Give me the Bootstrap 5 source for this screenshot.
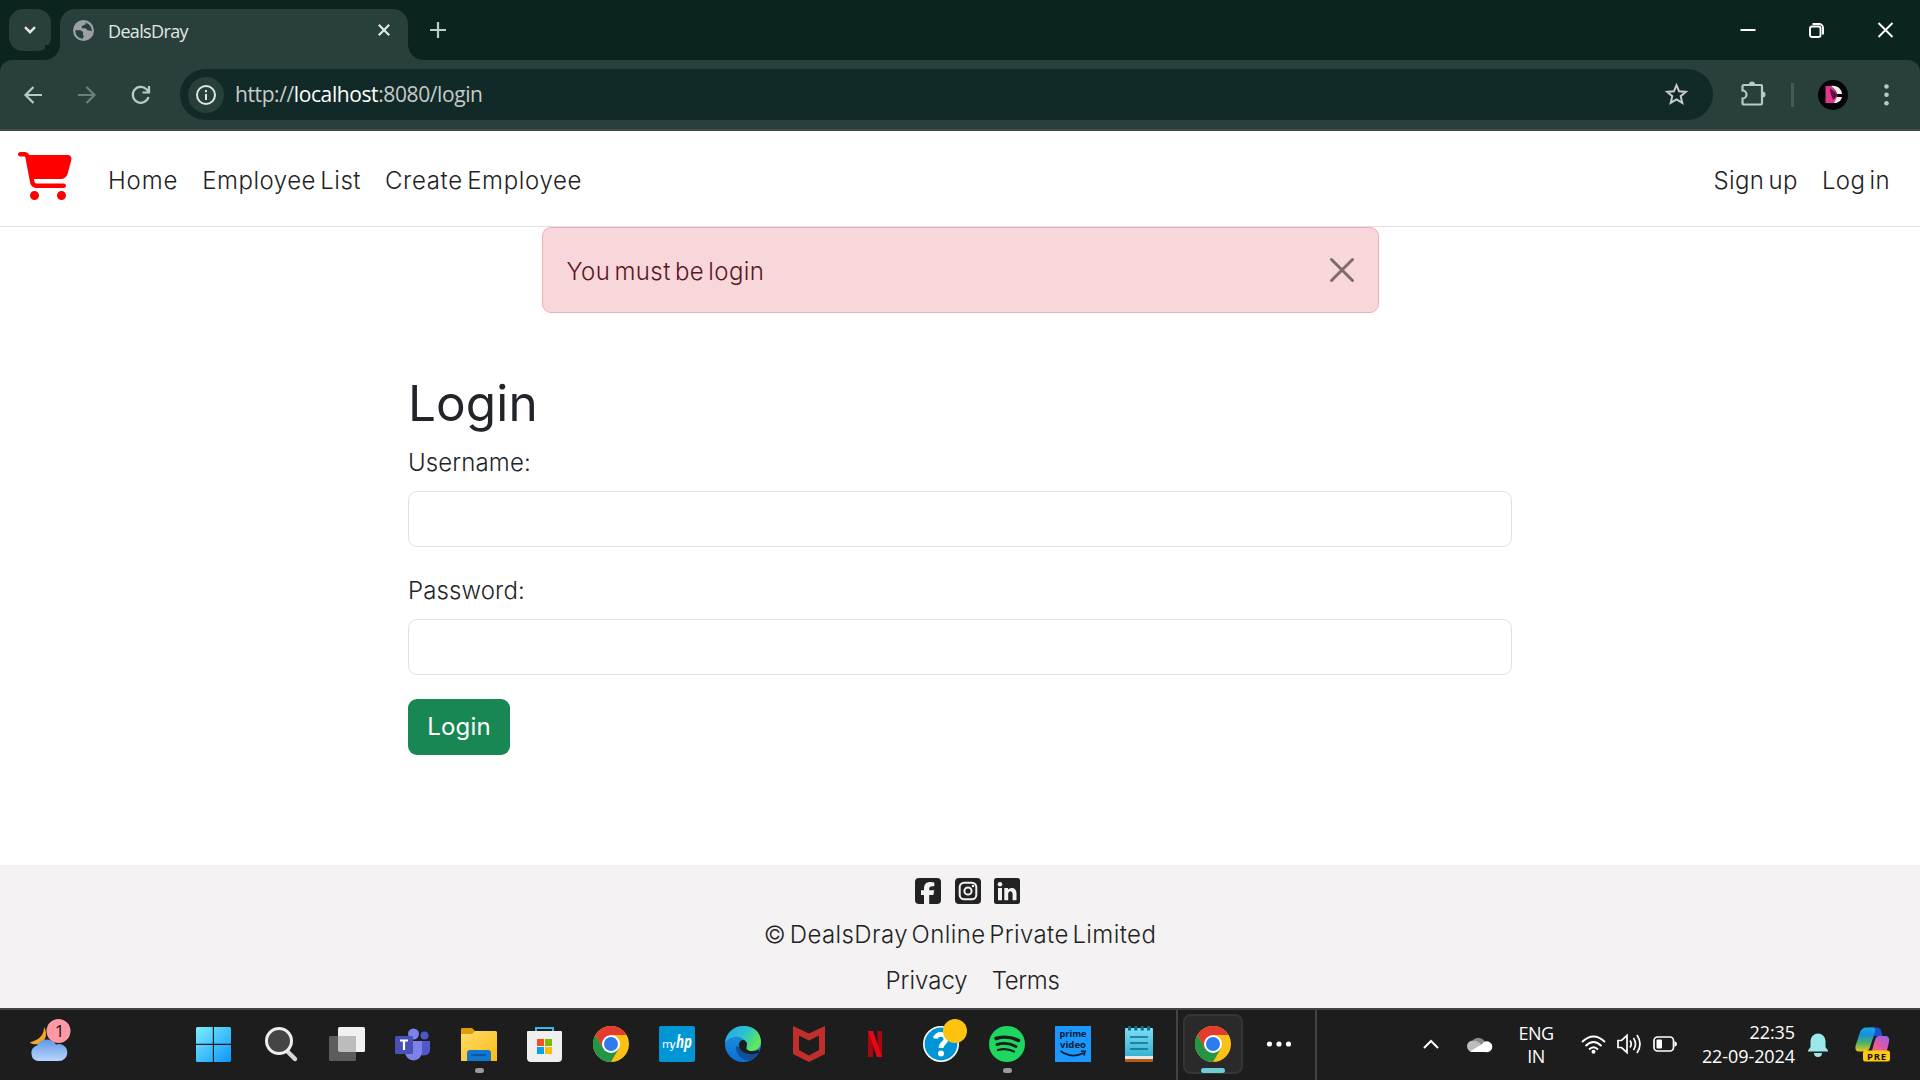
<!DOCTYPE html>
<html lang="en">
<head>
<meta charset="utf-8">
<title>DealsDray</title>
<link href="https://cdn.jsdelivr.net/npm/bootstrap@5.3.0/dist/css/bootstrap.min.css" rel="stylesheet">
<style>
html{font-size:24px}
body{width:1920px;height:1080px;overflow:hidden;font-family:Inter,"Liberation Sans",sans-serif;font-weight:300;color:#212529;background:#fff}
svg{display:block;flex:none;overflow:visible}
.seg{font-family:"Open Sans","Noto Sans",sans-serif;font-weight:400}
.tabstrip{height:60px;background:#0b2420;color:#e3e8e6}
.tabsearch{width:42px;height:42px;margin:9px 9px 0 9px;border-radius:14px;background:#283f3b}
.tabbox{width:348px;height:51px;margin-top:9px;border-radius:15px 15px 0 0;background:#283f3b;padding:0 18px 0 13px;position:relative}
.tabbox::before,.tabbox::after{content:"";position:absolute;bottom:0;width:15px;height:15px}
.tabbox::before{left:-15px;background:radial-gradient(circle at 0 0,#0b2420 14.5px,#283f3b 15px)}
.tabbox::after{right:-15px;background:radial-gradient(circle at 100% 0,#0b2420 14.5px,#283f3b 15px)}
.tabtitle{font-size:18px;letter-spacing:-.65px;margin:-7px 0 0 14px;line-height:24px}
.tabicon{margin-top:-9px}
.newtab{margin-left:22px}
.wincell{width:69px}
.toolbox{height:71px;background:#0b2420}
.toolinner{width:1920px;height:71px;border-radius:12px 12px 0 0;background:#283f3b;border-bottom:2px solid #454a49}
.backicon{margin-left:24px}
.gap36{margin-left:36px}
.omni{width:1533px;height:51px;border-radius:26px;background:#112a27;margin-left:30px}
.infoc{width:36px;height:36px;border-radius:50%;background:#283f3b;margin-left:8px}
.url{font-size:21px;letter-spacing:-.4px;margin:-2px 0 0 11px;color:#c7cbca;line-height:30px}
.url span{color:#fff}
.star{margin:-2px 25px 0 auto}
.puzzle{margin:-3px 0 0 28px}
.toolsep{width:3px;height:24px;margin-left:25px;background:#415a55}
.avatar{margin-left:24px}
.sitenav{height:96px;border-bottom:1px solid #dee2e6;padding:5px 18px 0}
.sitenav .nav-link{color:#222;padding:0 12px;line-height:36px;white-space:nowrap}
.sitenav .nav-link:focus,.sitenav .nav-link:hover{color:#222}
.brandcart{margin:-11px 24px 0 0}
.nl1{letter-spacing:.85px}
.nl2{letter-spacing:.5px;word-spacing:-3px}
.nl3{letter-spacing:.65px;word-spacing:-3px}
.nl4{letter-spacing:.4px;word-spacing:-3px}
.notice{width:837px;height:86px;padding:0 24px;border-radius:9px;color:#58151c;background:#f8d7da;border:1px solid #f1aeb5;line-height:36px}
.notice span{padding-top:3px;letter-spacing:.42px;word-spacing:-3px}
.formcol{width:1104px;height:552px;padding-top:61px}
.formcol h1{font-size:49.5px;font-weight:400;line-height:58px;margin:0 0 13px;letter-spacing:.1px}
.formcol label{line-height:36px;margin-bottom:10px;display:block;letter-spacing:.12px}
.formcol .form-control{height:56px;border-radius:9px;border-color:#dee2e6;margin-bottom:26px}
.formcol .btn{height:56px;padding:0;width:102px;border-radius:9px;background:#198754;line-height:56px;font-size:24px;border:0;display:block;margin-top:-2px;letter-spacing:.2px}
.sitefoot{height:143px;background:#f4f2f3;color:#222;text-align:center;padding-top:13px}
.sitefoot a{color:#222;text-decoration:none}
.socials{gap:13.5px;padding-left:15px}
.copyline{margin-top:13px;line-height:36px;letter-spacing:.4px;word-spacing:-3.5px}
.legal{margin-top:10px;line-height:36px;gap:24px;padding-left:25px}
.legal a+a{letter-spacing:-.35px}
.taskbar{height:72px;background:#1d1d1d;border-top:2px solid #434343;color:#fff;padding-bottom:2px}
.weather{width:182px;padding-left:30px}
.weather svg{margin-top:-6px}
.tcell{width:66px;height:70px;position:relative}
.nudge1 svg{margin-left:-2px}
.nudge3 svg{margin-left:-3px}
.dotm{position:absolute;bottom:6px;left:50%;margin-left:-4px;width:9px;height:5px;border-radius:3px;background:#9a9a9a}
.lang{width:46px;margin:2px 0 0 22px;font-size:18px;line-height:23px;letter-spacing:-.6px}
.clock{font-size:18px;line-height:24px;text-align:right;letter-spacing:-.08px;width:100px;margin:-1px 0 0 18px}
.running{width:60px;height:60px;border-radius:8px;background:#2a2a2a;border:2px solid #353535;margin-left:5px;position:relative}
.running i{position:absolute;left:16px;bottom:-1px;width:24px;height:5px;border-radius:3px;background:#6fcbd6}
.vline{width:2px;height:70px;background:#434343;align-self:flex-start}
.firstline{margin-left:4px}
.gap24{margin-left:24px}
.traystart{margin-left:106px}
.gap28{margin-left:28px}
.gap22{margin-left:22px}
.gap11{margin-left:11px}
.bell{margin-left:13px}
.copilot{margin-left:27px}
</style>
<script src="https://cdn.jsdelivr.net/npm/bootstrap@5.3.0/dist/js/bootstrap.bundle.min.js"></script>
</head>
<body class="d-flex flex-column">
<svg width="0" height="0" class="position-absolute"><defs>
<linearGradient id="win" x1="0" y1="0" x2="1" y2="1"><stop offset="0" stop-color="#7cf0fd"/><stop offset="1" stop-color="#0d94fb"/></linearGradient>
<linearGradient id="cloudg" x1="0" y1="0" x2="0" y2="1"><stop offset="0" stop-color="#5f98e8"/><stop offset="1" stop-color="#b9d5fb"/></linearGradient>
<linearGradient id="fold" x1="0" y1="0" x2="1" y2="1"><stop offset="0" stop-color="#ffdc6a"/><stop offset="1" stop-color="#fabb14"/></linearGradient>
<linearGradient id="edg1" x1="0" y1="0" x2="1" y2=".5"><stop offset="0" stop-color="#2aa5ee"/><stop offset=".55" stop-color="#2ac3cd"/><stop offset="1" stop-color="#62e75b"/></linearGradient>
<linearGradient id="edg2" x1="0" y1="0" x2="0" y2="1"><stop offset="0" stop-color="#2297e0"/><stop offset="1" stop-color="#0b6fd0"/></linearGradient>
<linearGradient id="cop1" x1="0" y1="0" x2="0" y2="1"><stop offset="0" stop-color="#18a8ea"/><stop offset=".3" stop-color="#1590da"/><stop offset=".65" stop-color="#4eb264"/><stop offset="1" stop-color="#e9c81c"/></linearGradient>
<linearGradient id="cop2" x1="1" y1="0" x2="0" y2="1"><stop offset="0" stop-color="#9b5cf0"/><stop offset=".5" stop-color="#e2589f"/><stop offset="1" stop-color="#f58a50"/></linearGradient>
<linearGradient id="note" x1="0" y1="0" x2="0" y2="1"><stop offset="0" stop-color="#7fdcf2"/><stop offset="1" stop-color="#38b2d3"/></linearGradient>
<symbol id="chrome" viewBox="0 0 36 36"><circle cx="18" cy="18" r="18" fill="#fbc116"/><path d="M18 9H33.6A18 18 0 0 0 2.4 9L10.2 22.5Z" fill="#e33b2e"/><path d="M2.4 9A18 18 0 0 0 18 36L25.8 22.5L18 20L10.2 22.5Z" fill="#249643"/><circle cx="18" cy="18" r="9" fill="#fff"/><circle cx="18" cy="18" r="7" fill="#2d7bee"/></symbol>
</defs></svg>

<header class="tabstrip d-flex flex-shrink-0">
  <div class="tabsearch d-flex align-items-center justify-content-center"><svg width="12" height="8" viewBox="0 0 12 8" fill="none" stroke="#e3e8e6" stroke-width="2.4"><path d="M1 1.2L6 6.2L11 1.2"/></svg></div>
  <div class="tabbox d-flex align-items-center">
    <svg class="tabicon" width="21" height="21" viewBox="0 0 21 21"><circle cx="10.5" cy="10.5" r="9.5" fill="#9aa0a6" stroke="#9aa0a6" stroke-width="2"/><path d="M2.300 10.500C5 10 8 10 9.500 11.500C11 13 9 14.500 10.500 15.500C11.500 16.200 10 18 9.500 18.700C5 18.200 2.300 14.500 2.300 10.500ZM9.500 2.300C12 2 13 3 12.500 4C12 5.500 9 5 8.500 7C9.500 9.500 12.500 7.500 14 9.500C15 11.500 17 10 18.700 11.500C19.200 7 16 2.500 9.500 2.300Z" fill="#283f3b"/></svg>
    <span class="tabtitle seg flex-grow-1">DealsDray</span>
    <svg class="tabicon" width="12" height="12" viewBox="0 0 12 12" stroke="#e3e8e6" stroke-width="2.2"><path d="M.8 .8L11.200 11.200M11.200 .8L.8 11.200"/></svg>
  </div>
  <svg class="newtab" width="16" height="60" viewBox="0 0 16 60" stroke="#b7cfc9" stroke-width="2.2"><path d="M0 30H16M8 22V38"/></svg>
  <div class="ms-auto d-flex align-items-center">
    <div class="wincell d-flex justify-content-center"><svg width="15" height="15"><path d="M.5 7H15.500" stroke="#fff" stroke-width="2"/></svg></div>
    <div class="wincell d-flex justify-content-center"><svg width="15" height="15" fill="none" stroke="#fff" stroke-width="1.900"><rect x="1" y="3.500" width="10.500" height="10.500" rx="2"/><path d="M3.500 1H10A4 4 0 0 1 14 5V11.500"/></svg></div>
    <div class="wincell d-flex justify-content-center"><svg width="15" height="15" stroke="#fff" stroke-width="1.900"><path d="M.5 0L14.500 14M14.500 0L.5 14"/></svg></div>
  </div>
</header>

<div class="toolbox flex-shrink-0"><div class="toolinner d-flex align-items-center">
  <svg class="backicon" width="18" height="18" viewBox="0 0 18 18" fill="none" stroke="#b2cdc6" stroke-width="2.200"><path d="M18 9H2M9.500 1L1.500 9L9.500 17"/></svg>
  <svg class="gap36" width="18" height="18" viewBox="0 0 18 18" fill="none" stroke="#6b807b" stroke-width="2.200"><path d="M0 9H16M8.500 1L16.500 9L8.500 17"/></svg>
  <svg class="gap36" width="18" height="18" viewBox="0 0 18 18" fill="none" stroke="#b2cdc6" stroke-width="2.200"><path d="M16.500 11A8 8 0 1 1 14.500 3.200L16 5M17 0V6.500H10.500"/></svg>
  <div class="omni d-flex align-items-center">
    <div class="infoc d-flex align-items-center justify-content-center"><svg width="20" height="20" viewBox="0 0 20 20"><circle cx="10" cy="10" r="9" fill="none" stroke="#dfe6e4" stroke-width="2"/><path d="M10 9V15M10 5V7.200" stroke="#dfe6e4" stroke-width="2"/></svg></div>
    <div class="url seg">http://<span>localhost</span>:8080/login</div>
    <svg class="star" width="23" height="22" viewBox="0 0 23 22" fill="none" stroke="#c7cbca" stroke-width="2"><path d="M11.500 2.200L14.100 8.300L20.800 8.900L15.700 13.200L17.300 19.800L11.500 16.300L5.700 19.800L7.300 13.200L2.200 8.900L8.900 8.300Z"/></svg>
  </div>
  <svg class="puzzle" width="25" height="25" viewBox="0 0 25 25" fill="none" stroke="#b2cdc6" stroke-width="2.200"><path d="M3 4H20Q21 4 21 5V22Q21 23.500 20 23.500H3Q1.500 23.500 1.500 22V17.500A4 4 0 0 0 1.500 9.500V5Q1.500 4 3 4Z"/><path d="M8 3.500A3 3 0 0 1 14 3.500ZM21.500 10.500A3 3 0 0 1 21.500 16.500Z" fill="#b2cdc6" stroke="none"/></svg>
  <div class="toolsep"></div>
  <svg class="avatar" width="30" height="30" viewBox="0 0 30 30"><circle cx="15" cy="15" r="15" fill="#050305"/><path d="M7.500 6H13Q23 15 17 23H7.500Z" fill="#e0368d"/><path d="M13 6C20 5 24 10 24 14H19C18 10 16 9 13 6ZM24 17C23 21 20 23 16 23L19 17Z" fill="#f1eef0"/><path d="M12 8L20 15L15 20Q12 14 12 8Z" fill="#5e0f3a"/></svg>
  <svg class="gap36" width="5" height="22" viewBox="0 0 5 22" fill="#b2cdc6"><circle cx="2.500" cy="2.500" r="2.300"/><circle cx="2.500" cy="10.800" r="2.300"/><circle cx="2.500" cy="19.200" r="2.300"/></svg>
</div></div>

<nav class="sitenav d-flex align-items-center flex-shrink-0">
  <svg class="brandcart" width="54" height="48" viewBox="0 0 576 512" fill="#f00"><path d="M0 24C0 10.700 10.700 0 24 0H69.500c22 0 41.500 12.800 50.600 32h411c26.300 0 45.500 25 38.600 50.400l-41 152.300c-8.500 31.400-37 53.300-69.500 53.300H170.700l5.400 28.500c2.200 11.300 12.100 19.500 23.600 19.500H488c13.300 0 24 10.700 24 24s-10.700 24-24 24H199.700c-34.600 0-64.300-24.600-70.700-58.500L77.400 54.500c-.7-3.800-4-6.500-7.900-6.500H24C10.700 48 0 37.300 0 24zM128 464a48 48 0 1 1 96 0 48 48 0 1 1-96 0zm336-48a48 48 0 1 1 0 96 48 48 0 1 1 0-96z"/></svg>
  <div class="d-flex"><a class="nav-link nl1" href="#">Home</a><a class="nav-link nl2" href="#">Employee List</a><a class="nav-link nl3" href="#">Create Employee</a></div>
  <div class="d-flex ms-auto"><a class="nav-link nl4" href="#">Sign up</a><a class="nav-link nl4" href="#">Log in</a></div>
</nav>

<main class="d-flex flex-column align-items-center flex-shrink-0">
  <div class="notice d-flex justify-content-between align-items-center"><span>You must be login</span><svg width="24" height="24" stroke="#7d6b6e" stroke-width="3" stroke-linecap="round"><path d="M1.500 1.500L22.500 22.500M22.500 1.500L1.500 22.500"/></svg></div>
  <form class="formcol">
    <h1>Login</h1>
    <label for="u">Username:</label><input id="u" class="form-control" type="text">
    <label for="p">Password:</label><input id="p" class="form-control" type="password">
    <button type="button" class="btn btn-success">Login</button>
  </form>
</main>

<footer class="sitefoot flex-shrink-0">
  <div class="socials d-flex justify-content-center">
    <svg width="26" height="26" viewBox="0 0 26 26"><rect width="26" height="26" rx="4" fill="#222"/><path d="M9 26V17H6V12.300H9V10.500C9 6 11.500 4 15.500 4Q17.500 4 19.300 4.400V8.300H17.300Q14.200 8.300 14.200 11V12.300H19.200L18.400 17H14.200V26Z" fill="#f4f2f3"/></svg>
    <svg width="26" height="26" viewBox="0 0 26 26"><rect width="26" height="26" rx="4" fill="#222"/><rect x="4.700" y="4.700" width="16.600" height="16.600" rx="4.500" fill="none" stroke="#f4f2f3" stroke-width="2"/><circle cx="13" cy="13" r="3.600" fill="none" stroke="#f4f2f3" stroke-width="2"/><circle cx="18" cy="8" r="1.300" fill="#f4f2f3"/></svg>
    <svg width="26" height="26" viewBox="0 0 26 26"><rect width="26" height="26" rx="2.500" fill="#222"/><circle cx="6" cy="6.200" r="2.300" fill="#f4f2f3"/><path d="M4 10H8V22.300H4ZM10.300 10H14V11.700C15.500 9.300 22.500 8.500 22.500 15.500V22.300H18.600V16.300C18.600 12 14.200 12.300 14.200 16.300V22.300H10.300Z" fill="#f4f2f3"/></svg>
  </div>
  <div class="copyline">© DealsDray Online Private Limited</div>
  <div class="legal d-flex justify-content-center"><a href="#">Privacy</a><a href="#">Terms</a></div>
</footer>

<div class="taskbar d-flex align-items-center flex-shrink-0">
  <div class="weather"><svg width="42" height="44" viewBox="0 0 42 44"><path d="M14 8C20 18 12 29 0 24C0 22 14 22 14 8Z" fill="#f5a623"/><path d="M8 42A8 8 0 0 1 7 26.500A11 11 0 0 1 26 25.500A8.500 8.500 0 1 1 28 42Z" fill="url(#cloudg)"/><circle cx="28.500" cy="12" r="12" fill="#ff99a4"/><text x="29.500" y="18" font-size="17" font-family="Open Sans" font-weight="400" fill="#111" text-anchor="middle">1</text></svg></div>
  <div class="tcell nudge3 d-flex align-items-center justify-content-center"><svg width="35" height="35" viewBox="0 0 35 35"><path d="M1 0H16.800V16.800H0V1ZM18 0H34L35 1V16.800H18ZM0 18H16.800V35H1L0 34ZM18 18H35V34L34 35H18Z" fill="url(#win)"/></svg></div>
  <div class="tcell d-flex align-items-center justify-content-center"><svg width="32" height="34" viewBox="0 0 32 34"><path d="M22 24L30 32" stroke="#d4d9dd" stroke-width="4.500" stroke-linecap="round"/><circle cx="14" cy="14" r="12.500" fill="#454545" stroke="#eceeef" stroke-width="3"/></svg></div>
  <div class="tcell d-flex align-items-center justify-content-center"><svg width="36" height="34" viewBox="0 0 36 34"><rect x="9" y="0" width="27" height="25" rx="1.500" fill="#f1f1f1"/><rect x="0" y="9" width="27" height="25" rx="1.500" fill="#5c5c5c"/><path d="M9 9H27V25H10.500L9 23.500Z" fill="#bcbcbc"/></svg></div>
  <div class="tcell nudge1 d-flex align-items-center justify-content-center"><svg width="35" height="33" viewBox="0 0 35 33"><circle cx="29.500" cy="7.500" r="4" fill="#4f57c8"/><circle cx="18.500" cy="6" r="5.500" fill="#7b83eb"/><path d="M25 13H35V22A6 6 0 0 1 25 26Z" fill="#5059c9"/><path d="M10 13H27V24A8.500 8.500 0 0 1 10 24Z" fill="#7b83eb"/><rect y="8" width="18" height="18" rx="1.500" fill="#4951b5"/><path d="M5 12.500H13M9 12.500V22" stroke="#fff" stroke-width="2.200"/></svg></div>
  <div class="tcell d-flex align-items-center justify-content-center"><svg width="36" height="33" viewBox="0 0 36 33"><path d="M0 1Q0 0 1.500 0H11L15 4L11 7H0Z" fill="#dd9d08"/><path d="M0 6H11L14 3H35L36 4V33H0Z" fill="url(#fold)"/><path d="M6 33V25Q6 22 9 22H27Q30 22 30 25V33Z" fill="#1079ce"/><path d="M10 27H25" stroke="#074d94" stroke-width="1.500"/></svg><span class="dotm"></span></div>
  <div class="tcell nudge1 d-flex align-items-center justify-content-center"><svg width="35" height="35" viewBox="0 0 35 35"><path d="M9 6V1H26V6" fill="none" stroke="#34b7ef" stroke-width="2"/><path d="M0 5Q0 4 1 4H34Q35 4 35 5V31Q35 35 31 35H4Q0 35 0 31Z" fill="#efefef"/><path d="M10 12H17V19H10Z" fill="#f25022"/><path d="M18 12H25V19H18Z" fill="#7fba00"/><path d="M10 20H17V27H10Z" fill="#00a4ef"/><path d="M18 20H25V27H18Z" fill="#ffb900"/></svg></div>
  <div class="tcell d-flex align-items-center justify-content-center"><svg width="36" height="36"><use href="#chrome"/></svg></div>
  <div class="tcell d-flex align-items-center justify-content-center"><svg width="36" height="36" viewBox="0 0 36 36"><rect width="36" height="36" rx="2" fill="#0096d6"/><text x="3" y="21.500" font-family="Open Sans" font-size="11.500" font-weight="500" fill="#fff" textLength="13.500">my</text><text x="17" y="22" font-family="Open Sans" font-size="17" font-weight="700" font-style="italic" fill="#fff" textLength="16" lengthAdjust="spacingAndGlyphs">hp</text></svg></div>
  <div class="tcell d-flex align-items-center justify-content-center"><svg width="36" height="36" viewBox="0 0 36 36"><circle cx="18" cy="18" r="18" fill="url(#edg2)"/><path d="M11 20C10 28 18 36 25 34C29 32 33 29 34 26C28 29 20 27 17 22Z" fill="#0f4f9e"/><path d="M0 17C3-6 36-5 36 16C36 22 31 25 26 25C22 25 21 23 21.500 21.500C23 19 21 13 14 11C8 9.500 2 13 0 17Z" fill="url(#edg1)"/><path d="M14 18C15 14 18 13 20.500 15C23 17.500 21.500 20 21.300 22C21.500 25 28 26.500 34.500 23.500L33.500 27C26 30 13 27 14 18Z" fill="#1d1d1d"/></svg></div>
  <div class="tcell d-flex align-items-center justify-content-center"><svg width="32" height="36" viewBox="0 0 32 36"><path d="M0 0L16 7.500L32 0V28L16 36L0 28ZM6 9.500V24L16 29.500L26 24V9.500L16 14.500Z" fill="#c12f2c" fill-rule="evenodd"/></svg></div>
  <div class="tcell d-flex align-items-center justify-content-center"><svg width="14" height="26" viewBox="0 0 14 26"><path d="M0 0H5V26H0ZM9.500 0H14V26H9.500Z" fill="#a8070f"/><path d="M0 0H5L14 26H9Z" fill="#e50914"/></svg></div>
  <div class="tcell d-flex align-items-center justify-content-center"><svg width="36" height="36" viewBox="0 0 36 36"><circle cx="18" cy="18" r="17.200" fill="#0096d6" stroke="#fff" stroke-width="1.600"/><path d="M12.500 12.500C13 7 23 7 23 13C23 17 18 17 18 22" fill="none" stroke="#fff" stroke-width="4.800"/><circle cx="18" cy="27.500" r="3" fill="#fff"/><circle cx="32" cy="5" r="12" fill="#ffc20e"/></svg></div>
  <div class="tcell d-flex align-items-center justify-content-center"><svg width="36" height="36" viewBox="0 0 36 36"><circle cx="18" cy="18" r="18" fill="#1ed760"/><g fill="none" stroke="#1d1d1d" stroke-linecap="round"><path d="M7 12.500Q19 9 29.500 14.500" stroke-width="3.400"/><path d="M8 18.500Q18 15.500 27 20.500" stroke-width="2.900"/><path d="M9 24Q17 21.500 25 25.500" stroke-width="2.300"/></g></svg><span class="dotm"></span></div>
  <div class="tcell d-flex align-items-center justify-content-center"><svg width="36" height="36" viewBox="0 0 36 36"><rect width="36" height="36" fill="#1a98ff"/><g font-family="Open Sans" font-weight="700" font-size="9" fill="#0b1a2b"><text x="4.500" y="11" textLength="27" lengthAdjust="spacingAndGlyphs">prime</text><text x="5" y="22" textLength="26" lengthAdjust="spacingAndGlyphs">video</text></g><path d="M5.500 25Q17 33 28.500 27M26 25.200L30 25.200L29 29.500" fill="none" stroke="#0b1a2b" stroke-width="1.600"/></svg></div>
  <div class="tcell d-flex align-items-center justify-content-center"><svg width="28" height="36" viewBox="0 0 28 36"><rect y="31" width="28" height="5" rx="1" fill="#b85c14"/><rect y="28" width="28" height="5" fill="#e8e8e8"/><path d="M0 3Q0 2 1 2H27Q28 2 28 3V30H0Z" fill="url(#note)"/><path d="M5 11H23M5 17H23M5 23H23" stroke="#08708f" stroke-width="1.700"/><path d="M4.500 0V4.500M10.800 0V4.500M17.200 0V4.500M23.500 0V4.500" stroke="#08708f" stroke-width="3"/></svg></div>
  <div class="vline firstline"></div>
  <div class="running d-flex align-items-center justify-content-center"><svg width="36" height="36"><use href="#chrome"/></svg><i></i></div>
  <svg class="gap24" width="24" height="6" viewBox="0 0 24 6" fill="#fff"><circle cx="2.500" cy="3" r="2.600"/><circle cx="12" cy="3" r="2.600"/><circle cx="21.500" cy="3" r="2.600"/></svg>
  <div class="vline gap24"></div>
  <svg class="traystart" width="16" height="10" viewBox="0 0 16 10" fill="none" stroke="#fff" stroke-width="2"><path d="M1 9L8 2L15 9"/></svg>
  <svg class="gap28" width="24" height="16" viewBox="0 0 24 16"><path d="M6 4A7.500 7.500 0 0 1 18 6L12 10Z" fill="#8a8a8a"/><path d="M5.500 16A5.500 5.500 0 0 1 6 4.500Q10 4 13 7L17 16Z" fill="#bdbdbd"/><path d="M3 15.500L15 8A5.500 5.500 0 1 1 18.500 16H5Z" fill="#fff"/></svg>
  <div class="lang seg text-center">ENG<br>IN</div>
  <svg class="gap22" width="25" height="19" viewBox="0 0 25 19" fill="none" stroke="#fff" stroke-width="1.800"><path d="M1 7Q12.500-4 24 7M4.500 11Q12.500 3 20.500 11M8 14.500Q12.500 10 17 14.500"/><circle cx="12.500" cy="16.700" r="2" fill="#fff" stroke="none"/></svg>
  <svg class="gap11" width="25" height="20" viewBox="0 0 25 20" fill="none" stroke="#fff" stroke-width="1.700"><path d="M1 6.500H4.500L10 1.500V18.500L4.500 13.500H1ZM13 6.500Q15.500 10 13 13.500M16.500 4Q20.500 10 16.500 16M20 1Q26 10 20 19"/></svg>
  <svg class="gap11" width="24" height="16" viewBox="0 0 24 16"><rect x="1" y="1" width="19.500" height="14" rx="3.500" fill="none" stroke="#fff" stroke-width="1.700"/><rect x="3.500" y="3.500" width="5.500" height="9" rx="1" fill="#fff"/><path d="M21.500 5Q24 6 24 8T21.500 11Z" fill="#fff"/></svg>
  <div class="clock seg">22:35<br>22-09-2024</div>
  <svg class="bell" width="20" height="23" viewBox="0 0 20 23" fill="#9be8ea"><path d="M2.500 8A7.500 7.500 0 0 1 17.500 8V14L20 17.500V18.500H0V17.500L2.500 14ZM6 20H14A4 4 0 0 1 6 20Z"/></svg>
  <svg class="copilot" width="36" height="35" viewBox="0 0 36 35"><path d="M14 .5H22Q25 .5 26 3.500L27.500 9Q21 9 20 15L16 8Z" fill="#1c50cf"/><path d="M5 5Q7 .5 11 .5H18Q21 .5 20 5L15 20Q13.500 24.500 9 24.500H4Q-.5 24.500 .5 19Z" fill="url(#cop1)"/><path d="M20 13Q21.500 9 25 9H31Q35 9.500 34 15L31.500 25H8Q13 25 15 22.500Z" fill="url(#cop2)"/><path d="M19 9H22Q20.500 10 19.500 14L17 24H13.500Q15.500 22 16 19Z" fill="#1d1d1d"/><rect x="8" y="23.500" width="27" height="11" rx="2.500" fill="#ffc90e"/><text x="12" y="32.500" font-family="Open Sans" font-size="9.500" font-weight="700" fill="#111" textLength="19">PRE</text></svg>
</div>
</body>
</html>
